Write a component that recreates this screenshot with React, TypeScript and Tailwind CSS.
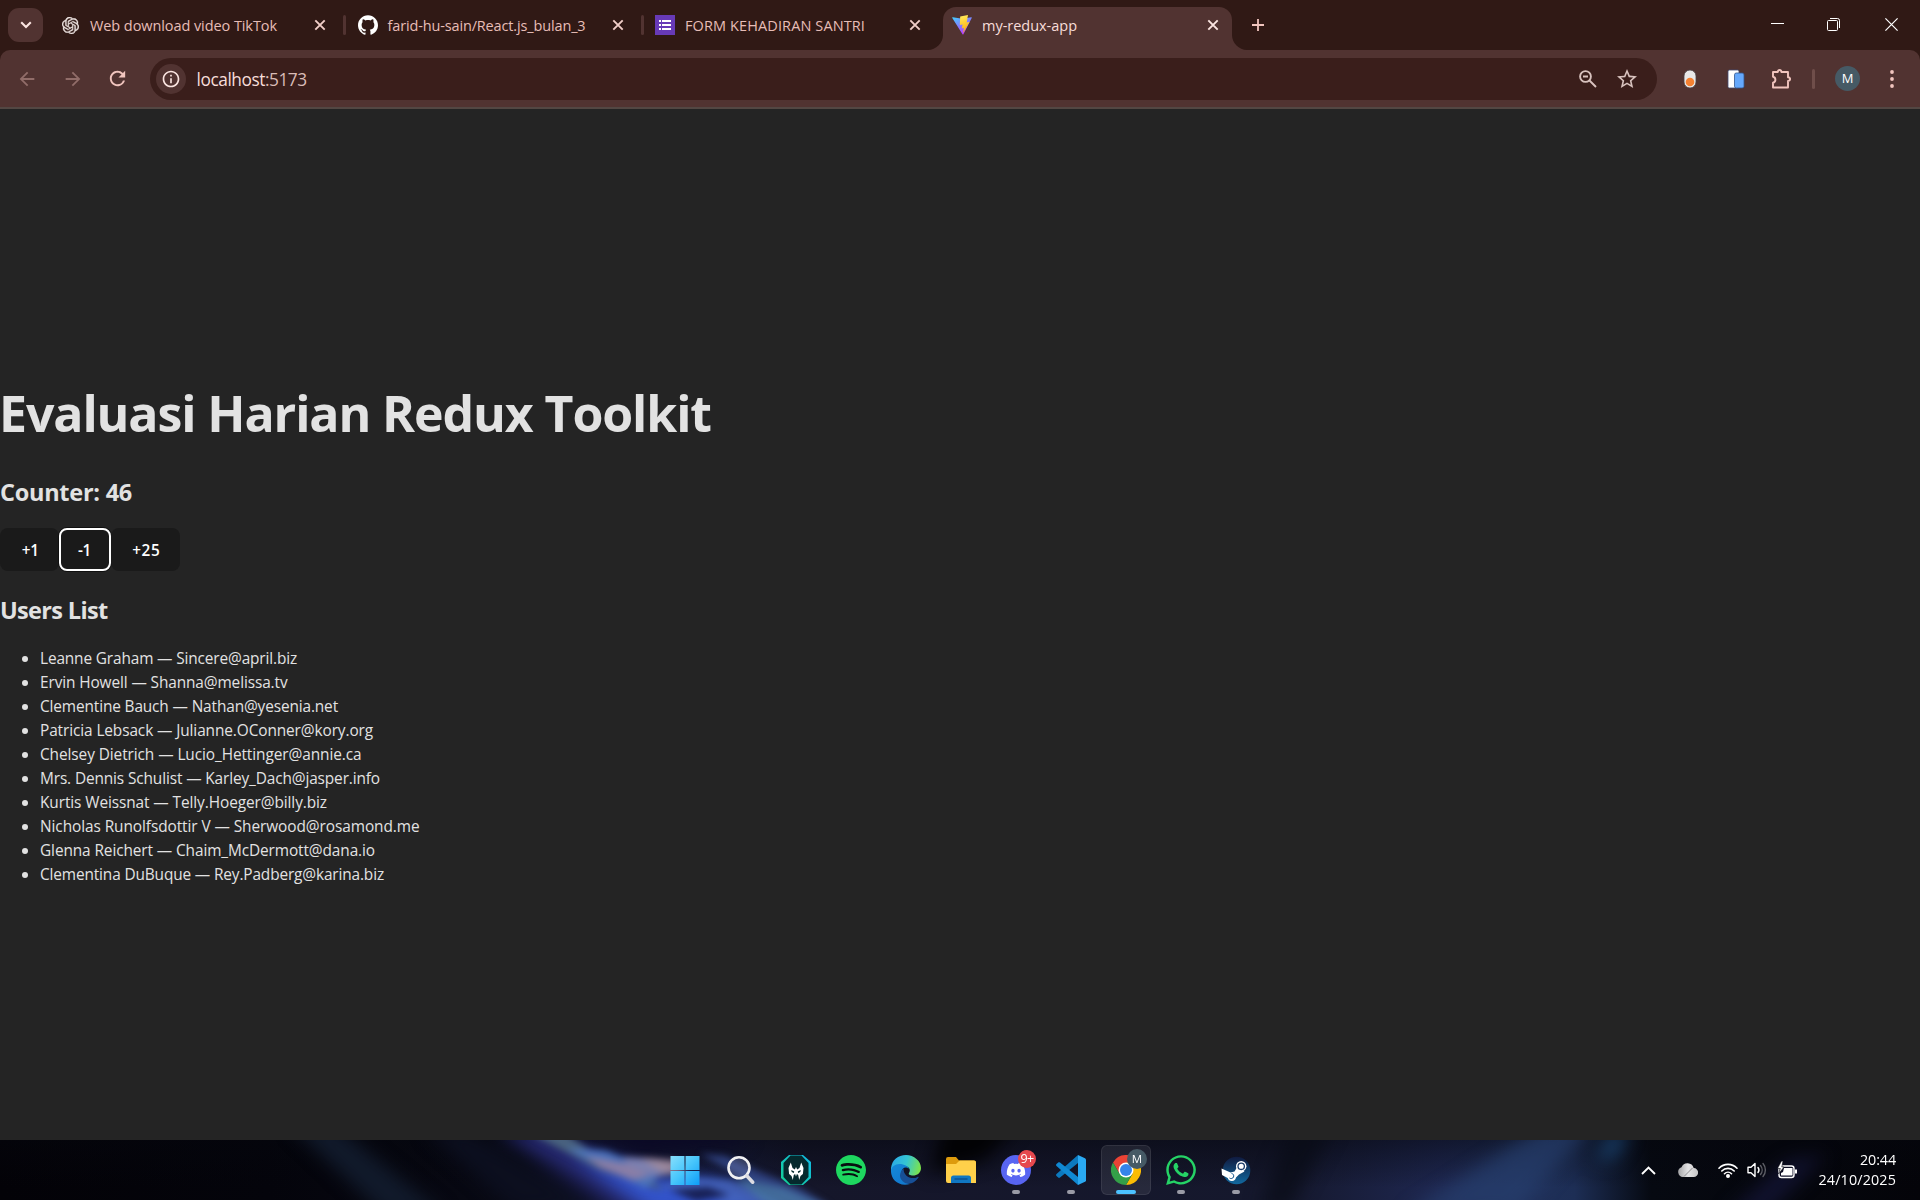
import { useLayoutEffect, useRef, useState, type ReactNode } from "react";
import { SiGithub, SiOpenai, SiSpotify } from "react-icons/si";
import { FaDiscord, FaWhatsapp } from "react-icons/fa";
import { MdArrowBack, MdArrowForward, MdOutlineInfo, MdRefresh, MdStarBorder } from "react-icons/md";

const users = [
  { name: "Leanne Graham", email: "Sincere@april.biz", width: 257 },
  { name: "Ervin Howell", email: "Shanna@melissa.tv", width: 247.5 },
  { name: "Clementine Bauch", email: "Nathan@yesenia.net", width: 298 },
  { name: "Patricia Lebsack", email: "Julianne.OConner@kory.org", width: 333 },
  { name: "Chelsey Dietrich", email: "Lucio_Hettinger@annie.ca", width: 321.5 },
  { name: "Mrs. Dennis Schulist", email: "Karley_Dach@jasper.info", width: 340 },
  { name: "Kurtis Weissnat", email: "Telly.Hoeger@billy.biz", width: 287 },
  { name: "Nicholas Runolfsdottir V", email: "Sherwood@rosamond.me", width: 379.5 },
  { name: "Glenna Reichert", email: "Chaim_McDermott@dana.io", width: 335 },
  { name: "Clementina DuBuque", email: "Rey.Padberg@karina.biz", width: 344 },
];

/* Single-line text whose tracking is adjusted so it fills the given width. */
function Fit({ text, width, className = "" }: { text: string; width: number; className?: string }) {
  const ref = useRef<HTMLSpanElement>(null);
  const [spacing, setSpacing] = useState(0);
  useLayoutEffect(() => {
    const el = ref.current;
    if (el) setSpacing((width - el.getBoundingClientRect().width) / text.length);
  }, [text, width]);
  return (
    <span ref={ref} className={`inline-block whitespace-pre ${className}`} style={{ letterSpacing: `${spacing}px` }}>
      {text}
    </span>
  );
}

function Cross({ className }: { className: string }) {
  return (
    <svg viewBox="0 0 12 12" className={`size-3 shrink-0 ${className}`} fill="none" stroke="currentColor" strokeWidth="1.9">
      <path d="M1.3 1.3l9.4 9.4M10.7 1.3l-9.4 9.4" />
    </svg>
  );
}

function Tab({ icon, title, width, divider }: { icon: ReactNode; title: string; width: number; divider?: boolean }) {
  return (
    <div className="flex h-full w-[297.5px] shrink-0 items-center">
      <div className="flex w-5 shrink-0 justify-center">{icon}</div>
      <div className="mt-px ml-[10px] w-[215px] text-[14.5px] leading-5 text-[#e7bdb7]">
        <Fit text={title} width={width} />
      </div>
      <Cross className="ml-[9px] text-[#f1cec8]" />
      {divider && <div className="ml-[17px] h-5 w-[3px] rounded-full bg-[#513331]" />}
    </div>
  );
}

function ViteLogo() {
  return (
    <svg viewBox="0 0 20 20" className="size-5">
      <defs>
        <linearGradient id="vite-a" x1="0" y1="0" x2="0.6" y2="1">
          <stop stopColor="#41d1ff" />
          <stop offset="1" stopColor="#bd34fe" />
        </linearGradient>
        <linearGradient id="vite-b" x1="0.4" y1="0" x2="0.6" y2="1">
          <stop stopColor="#ffea5a" />
          <stop offset="1" stopColor="#ffa800" />
        </linearGradient>
      </defs>
      <path fill="url(#vite-a)" d="M19.7 3.1 11.4 19.3a.5.5 0 0 1-.9 0L.3 3.1a.5.5 0 0 1 .5-.8l9.5 1.4 8.9-1.4a.5.5 0 0 1 .5.8Z" />
      <path fill="url(#vite-b)" d="M16 0 8.200 1.500 7.800 10l2.800-.6-.8 4 2.200-.6-1 5.400 6.700-11.400-3 .6Z" />
    </svg>
  );
}

function TabStrip() {
  return (
    <div className="flex h-[50px] items-center bg-[#301915]">
      <div className="ml-2 flex h-[34px] w-[35px] shrink-0 items-center justify-center rounded-[11px] bg-[#513331]">
        <svg viewBox="0 0 12 8" className="h-2 w-3" fill="none" stroke="#fbe5e1" strokeWidth="2.1">
          <path d="M1.200 1.300 6 6l4.800-4.700" />
        </svg>
      </div>
      <div className="ml-[17px] flex h-full">
        <Tab
          icon={<SiOpenai className="size-[17px] text-[#eee4e2]" stroke="currentColor" strokeWidth=".5" />}
          title="Web download video TikTok"
          width={187}
          divider
        />
        <Tab icon={<SiGithub className="size-5 text-white" />} title="farid-hu-sain/React.js_bulan_3" width={198} divider />
        <Tab
          icon={
            <svg viewBox="0 0 20 20" className="size-5">
              <path fill="#673ab7" d="M0 0h20v20H0z" />
              <path fill="#fff" d="M4 5h2v2H4zm3 0h9v2H7zM4 9h2v2H4zm3 0h9v2H7zm-3 4h2v2H4zm3 0h9v2H7z" />
            </svg>
          }
          title="FORM KEHADIRAN SANTRI"
          width={180}
        />
      </div>
      <div className="-ml-[24.5px] flex h-full w-[319px] shrink-0 items-end text-[#513331]">
        <svg viewBox="0 0 15 15" className="size-[15px] shrink-0" fill="currentColor">
          <path d="M15 0v15H0C8 15 15 8 15 0Z" />
        </svg>
        <div className="flex h-[43px] w-[289px] items-center rounded-t-[13px] bg-[#513331] pb-[7px] pl-[9px]">
          <ViteLogo />
          <div className="mt-0.5 ml-[10px] w-[226px] text-[14.5px] leading-5 text-[#f7ddd9]">
            <Fit text="my-redux-app" width={95} />
          </div>
          <Cross className="-ml-px text-[#fbe5e1]" />
        </div>
        <svg viewBox="0 0 15 15" className="size-[15px] shrink-0" fill="currentColor">
          <path d="M0 0v15h15C7 15 0 8 0 0Z" />
        </svg>
      </div>
      <svg viewBox="0 0 12 12" className="ml-[5px] size-3 shrink-0" stroke="#f1c5be" strokeWidth="1.800">
        <path d="M6 0v12M0 6h12" />
      </svg>
      <div className="mr-[22px] ml-auto flex items-center pb-0.5 text-white">
        <svg viewBox="0 0 13 13" className="size-[13px]" stroke="currentColor">
          <path d="M0 5.500h13" />
        </svg>
        <svg viewBox="0 0 13 13" className="ml-[43px] size-[13px]" fill="none" stroke="currentColor">
          <rect x=".5" y="2.500" width="10" height="10" rx="1" />
          <path d="M3 .5h7.500a2 2 0 0 1 2 2V10" />
        </svg>
        <svg viewBox="0 0 13 13" className="ml-[45px] size-[13px]" stroke="currentColor" strokeWidth="1.200">
          <path d="m.4.4 12.200 12.200M12.600.4.4 12.600" />
        </svg>
      </div>
    </div>
  );
}

function Toolbar() {
  return (
    <div className="bg-[#301915]">
      <div className="flex h-[59px] items-center rounded-t-[10px] border-b-2 border-[#534743] bg-[#513331]">
        <MdArrowBack className="ml-[16px] size-[22px] shrink-0 text-[#916d69]" />
        <MdArrowForward className="ml-[24px] size-[22px] shrink-0 text-[#916d69]" />
        <MdRefresh className="ml-[22px] size-[23px] shrink-0 text-[#f1c5be]" />
        <div className="mt-px ml-[21px] flex h-[42px] w-[1507px] shrink-0 items-center rounded-full bg-[#3a1e1b] px-1.5">
          <div className="flex size-[30px] items-center justify-center rounded-full bg-[#513331]">
            <MdOutlineInfo className="size-5 text-[#fbe5e1]" />
          </div>
          <div className="mt-px ml-[10.5px] flex text-[17.3px] leading-6 text-[#f7ddd9]">
            <Fit text="localhost" width={68.500} />
            <Fit text=":5173" width={41.5} className="text-[#d9bcb7]" />
          </div>
          <svg viewBox="0 0 18 18" className="ml-auto size-[18px]" fill="none" stroke="#d8c2be" strokeWidth="1.900">
            <circle cx="6.500" cy="6.500" r="5.400" />
            <path d="M10.500 10.500l6.500 6.500M4 6.500h5" />
          </svg>
          <MdStarBorder className="mr-[12px] ml-[18px] size-[24px] text-[#d8c2be]" />
        </div>
        <svg viewBox="0 0 14 20" className="ml-[26px] h-5 w-3.5 shrink-0">
          <rect x="1" y="1" width="12" height="18" rx="6" fill="#e8e8e8" stroke="#4a4145" strokeWidth=".8" />
          <circle cx="7" cy="13" r="4.300" fill="#f48132" />
        </svg>
        <svg viewBox="0 0 18 20" className="ml-[30px] h-5 w-[18px] shrink-0">
          <rect x="1" y="1" width="11" height="18" rx="1.500" fill="#fff" stroke="#434d75" strokeWidth=".8" />
          <rect x="7.500" y="4" width="9.500" height="15" rx="1.800" fill="#65a8fc" stroke="#31568e" strokeWidth=".8" />
        </svg>
        <svg viewBox="0 0 22 22" className="ml-[25px] size-[22px] shrink-0" fill="none" stroke="#f1c5be" strokeWidth="1.900" strokeLinejoin="round">
          <path d="M3 4h4.800c.3-2.600 3.300-2.600 3.600 0H18v5.200c2.800.4 2.800 3.400 0 3.800V19.500H3v-4.700c3.200-.7 3.200-5.300 0-6Z" />
        </svg>
        <div className="ml-5 h-5 w-[3px] rounded-full bg-[#6f4e4a]" />
        <div className="ml-5 flex size-[25px] shrink-0 items-center justify-center rounded-full bg-[#465a65] text-[13px] font-medium text-white">
          M
        </div>
        <svg viewBox="0 0 4 18" className="ml-[30px] h-[18px] w-1 shrink-0" fill="#f1c5be">
          <circle cx="2" cy="2" r="1.900" />
          <circle cx="2" cy="9" r="1.900" />
          <circle cx="2" cy="16" r="1.900" />
        </svg>
      </div>
    </div>
  );
}

function Page() {
  return (
    <main className="flex h-[1031px] flex-col justify-center bg-[#242424] text-[#e2e2e2]">
      <h1 className="mt-[23px] -ml-px text-[50px] leading-[56px] font-bold">
        <Fit text="Evaluasi Harian Redux Toolkit" width={712} />
      </h1>
      <h2 className="mt-[33px] text-[23.5px] leading-9 font-bold">
        <Fit text="Counter: 46" width={132} />
      </h2>
      <div className="mt-[18px] flex text-[15.3px] font-semibold text-white">
        <button className="h-[43px] w-[58.5px] rounded-lg bg-[#1a1a1a] pt-0.5 pl-0.5">
          <Fit text="+1" width={17} />
        </button>
        <button className="h-[43px] w-[52px] rounded-lg border-2 border-white bg-[#1a1a1a] pt-0.5 ring-1 ring-[#101010]">
          <Fit text="-1" width={13} />
        </button>
        <button className="h-[43px] w-[69.5px] rounded-lg bg-[#1a1a1a] pt-0.5 pl-0.5">
          <Fit text="+25" width={28} />
        </button>
      </div>
      <h2 className="mt-[21px] text-[23.5px] leading-9 font-bold">
        <Fit text="Users List" width={107.500} />
      </h2>
      <ul className="mt-[19px]">
        {users.map((user) => (
          <li key={user.name} className="flex h-6 items-center text-[15.4px]">
            <span className="mr-3 ml-[22px] size-1.5 rounded-full bg-[#e2e2e2]" />
            <Fit text={`${user.name} — ${user.email}`} width={user.width} />
          </li>
        ))}
      </ul>
    </main>
  );
}

function Wallpaper() {
  return (
    <svg viewBox="0 0 1920 60" className="absolute inset-0 h-full w-full" preserveAspectRatio="none">
      <defs>
        <linearGradient id="wall">
          <stop stopColor="#030207" />
          <stop offset=".14" stopColor="#04040b" />
          <stop offset=".27" stopColor="#080914" />
          <stop offset=".32" stopColor="#14163c" />
          <stop offset=".38" stopColor="#161a38" />
          <stop offset=".42" stopColor="#15162a" />
          <stop offset=".67" stopColor="#15182d" />
          <stop offset=".75" stopColor="#1e2750" />
          <stop offset=".79" stopColor="#20305a" />
          <stop offset=".82" stopColor="#1d2e55" />
          <stop offset=".86" stopColor="#060911" />
          <stop offset="1" stopColor="#040409" />
        </linearGradient>
        <linearGradient id="wall-shade" x2="0" y2="1">
          <stop stopColor="#05060d" stopOpacity=".5" />
          <stop offset=".8" stopColor="#05060d" stopOpacity="0" />
        </linearGradient>
        <filter id="soft" filterUnits="userSpaceOnUse" x="0" y="-40" width="1920" height="140" colorInterpolationFilters="sRGB">
          <feGaussianBlur stdDeviation="9" />
        </filter>
        <filter id="fine" filterUnits="userSpaceOnUse" x="0" y="-40" width="1920" height="140" colorInterpolationFilters="sRGB">
          <feGaussianBlur stdDeviation="3.500" />
        </filter>
      </defs>
      <path fill="url(#wall)" d="M0 0h1920v60H0z" />
      <path fill="url(#wall-shade)" d="M0 0h1920v60H0z" />
      <g filter="url(#soft)">
        <path fill="#111a2b" d="M290 -15h45l110 90h-60Z" />
        <path fill="#0c0f1f" d="M425 -10h40l140 80h-90Z" />
        <path fill="#252870" d="M495 -10h50l120 50 30 40h-55Z" />
        <path fill="#3354cc" d="M570 10l75 25 70 5 90 35H655l-45-32Z" />
        <path fill="#0b0926" d="M575 -20h170v22L640 12Z" />
        <path fill="#020204" d="M945 -20h75l-35 40-55 14Z" />
        <path fill="#090b16" d="M1292 -15h42l-45 85h-30Z" opacity=".7" />
        <path fill="#263e6e" d="M1545 -15h50l-80 90h-110Z" opacity=".7" />
        <path fill="#1c4777" d="M1610 -8h20l-16 28h-18Z" opacity=".8" />
        <path fill="#11122e" d="M1788 20l38-5-60 60h-40Z" />
      </g>
      <g filter="url(#fine)">
        <path fill="#49627f" d="M528 -8h36l24 17 50 18 25 24-65-22Z" />
        <path fill="#4d76c1" d="M566 8l40 3 56 22-16 16-45-22Z" opacity=".9" />
        <path fill="#8b7ea6" d="M585 16l42 8 24 12-18 4-32-12Z" />
        <path fill="#7c80b0" d="M622 17l38 2 14 14-18 4-26-10Z" />
        <path fill="#a08a9c" d="M640 18l34 2 14 14-24-1Z" opacity=".9" />
        <path fill="#4868bd" d="M655 47l40-9 35 2 60 25h-60l-35-14Z" opacity=".75" />
        <path fill="#182054" d="M670 50l38-3 22 8-34 6Z" />
        <path fill="#344a91" d="M700 14l25 2 35 16 40 16 30 18h-30l-55-27Z" opacity=".8" />
        <path fill="#4878a5" d="M735 38l50 10 45 20h-60Z" opacity=".8" />
      </g>
    </svg>
  );
}

function StartIcon() {
  return (
    <svg viewBox="0 0 30 30" className="mr-0.5 size-[30px]">
      <defs>
        <linearGradient id="win" x1="0" y1="0" x2="30" y2="30" gradientUnits="userSpaceOnUse">
          <stop stopColor="#8be0fc" />
          <stop offset=".5" stopColor="#48c6fb" />
          <stop offset="1" stopColor="#0c9cf8" />
        </linearGradient>
      </defs>
      <path fill="url(#win)" d="M.5 1h14v14H.5zM15.500 1h14v14h-14zM.5 16h14v14H.5zM15.500 16h14v14h-14z" />
    </svg>
  );
}

function SearchIcon() {
  return (
    <svg viewBox="0 0 30 30" className="size-[30px]" fill="none">
      <circle cx="13" cy="12.800" r="10.500" fill="#8090c0" fillOpacity=".3" stroke="#f1f1f3" strokeWidth="2.600" />
      <path d="m21 21 5.700 6.200" stroke="#dcdce2" strokeWidth="3.600" strokeLinecap="round" />
    </svg>
  );
}

function PredatorIcon() {
  return (
    <svg viewBox="0 0 30 30" className="size-[30px]">
      <defs>
        <linearGradient id="pred" x1="0" y1="1" x2="1" y2="0">
          <stop stopColor="#14d092" />
          <stop offset="1" stopColor="#12b9e8" />
        </linearGradient>
      </defs>
      <path fill="url(#pred)" d="M8 0h14l8 7v16l-8 7H8l-8-7V7Z" />
      <path fill="#05292d" d="M9.500.5h11l7 7.500v14l-7 7.500h-11l-7-7.500V8Z" />
      <path fill="#fff" d="m9.800 7.500 1.700 5.500 2.300 1.600L15 12l1.200 2.600 2.300-1.600 1.700-5.500 2.300 5.500-.6 6-2.400 2-1.300 4-1-5-1.300-1-.9 2.500-.9-2.500-1.300 1-1 5-1.300-4-2.400-2-.6-6Z" />
      <path fill="#05292d" d="m10.200 15 3 1.600-.3 1.300-2.200-.9ZM19.800 15l-3 1.600.3 1.300 2.200-.9Z" />
    </svg>
  );
}

function EdgeIcon() {
  return (
    <svg viewBox="0 0 30 30" className="size-[30px]">
      <defs>
        <linearGradient id="edge-a" x1="0" y1=".3" x2="1" y2=".5">
          <stop stopColor="#2aa9e8" />
          <stop offset=".5" stopColor="#35c5d4" />
          <stop offset="1" stopColor="#7be34c" />
        </linearGradient>
        <linearGradient id="edge-b" x1="0" y1="0" x2=".6" y2="1">
          <stop stopColor="#1489d8" />
          <stop offset="1" stopColor="#1279cf" />
        </linearGradient>
      </defs>
      <path fill="url(#edge-a)" d="M0 13C1 5 7 0 15 0s15 6 15 13c0 5-4 7.500-8 7.500-3 0-5-1-4-2.500 2-3 .5-7-5-7C7 11 2 13 0 18Z" />
      <path fill="url(#edge-b)" d="M0 16c0-4 4-7 8.500-7 5 0 8.500 2.500 9.500 5-3-3-7-1.500-7.500 3C10 23 14 28 19 29 8 32 0 25 0 16Z" />
      <path fill="#174f96" d="M12.500 13.500C9 17 7 22 12 26.500c5 4.500 12 1.500 15.500-4 .3-.6-.2-.9-.8-.6C21 25 12.500 22 12.500 13.500Z" />
    </svg>
  );
}

function FolderIcon() {
  return (
    <svg viewBox="0 0 30 30" className="size-[30px]">
      <path fill="#dd9b0d" d="M0 4a2 2 0 0 1 2-2h8l3 3.500h15a2 2 0 0 1 2 2V12H0Z" />
      <path fill="#ffd04a" d="M0 9h10l3.500-3.500H28a2 2 0 0 1 2 2V28H2a2 2 0 0 1-2-2Z" />
      <path fill="#1077c2" d="M5 28v-5a2.500 2.500 0 0 1 2.500-2.500h15A2.500 2.500 0 0 1 25 23v5Z" />
      <path stroke="#0b5292" strokeWidth="1.500" strokeLinecap="round" d="M9 24h12" />
    </svg>
  );
}

function DiscordIcon() {
  return (
    <div className="relative flex size-[30px] items-center justify-center rounded-full bg-[#5865f2]">
      <FaDiscord className="size-5 text-white" />
      <div className="absolute -top-[5px] left-[17px] flex size-[18px] items-center justify-center rounded-full bg-[#e6494e] text-[12.5px] leading-none tracking-tighter text-white">
        9+
      </div>
    </div>
  );
}

function CodeIcon() {
  return (
    <svg viewBox="0 0 30 30" className="size-[30px]">
      <path fill="#0c79be" d="M22 0v8L4 22.500c-.6.5-1.300.5-1.800 0L.5 21c-.6-.6-.6-1.300 0-1.900Z" />
      <path fill="#1089d3" d="M22 30v-8L4 7.500c-.6-.5-1.300-.5-1.800 0L.5 9c-.6.6-.6 1.300 0 1.900Z" />
      <path fill="#2aa9f2" d="m22 0 7 3.200a1.800 1.800 0 0 1 1 1.600v20.400a1.800 1.800 0 0 1-1 1.600L22 30Z" />
    </svg>
  );
}

function ChromeIcon() {
  return (
    <div className="relative size-[30px]">
      <svg viewBox="0 0 30 30" className="size-[30px]">
        <path fill="#ea4335" d="M2 7.500A15 15 0 0 1 28 7.500H15L8.500 18.700Z" />
        <path fill="#fbbc04" d="M28 7.500A15 15 0 0 1 15 30l6.500-11.200L15 7.500Z" />
        <path fill="#34a048" d="M15 30A15 15 0 0 1 2 7.500l6.500 11.200h13Z" />
        <circle cx="15" cy="15" r="7.500" fill="#fff" />
        <circle cx="15" cy="15" r="6" fill="#3584ea" />
      </svg>
      <div className="absolute -top-[6px] left-[16px] flex size-5 items-center justify-center rounded-full bg-[#465a65] text-[11.500px] leading-none text-white">
        M
      </div>
    </div>
  );
}

function SteamIcon() {
  return (
    <svg viewBox="0 0 30 30" className="size-[30px]">
      <defs>
        <linearGradient id="steam" x2="0" y2="1">
          <stop stopColor="#101a3f" />
          <stop offset="1" stopColor="#12699f" />
        </linearGradient>
      </defs>
      <circle cx="15.500" cy="15.500" r="13.800" fill="url(#steam)" />
      <path fill="#fff" d="m.5 13.500 9 4 4-1 3-5 7 5-5.500 3-3 3a4.300 4.300 0 0 1-8.300.5L1 20Z" />
      <circle cx="20.200" cy="11.300" r="5.200" fill="#fff" />
      <circle cx="20.200" cy="11.300" r="3.200" fill="none" stroke="#183a68" strokeWidth="1.300" />
      <path d="M8.500 23a2.600 2.600 0 1 0 2-4.600" fill="none" stroke="#12548a" strokeWidth="1" />
    </svg>
  );
}

type AppSlot = { icon: ReactNode; state?: "open" | "active" };

const apps: AppSlot[] = [
  { icon: <StartIcon /> },
  { icon: <SearchIcon /> },
  { icon: <PredatorIcon /> },
  {
    icon: (
      <div className="flex size-[30px] items-center justify-center rounded-full bg-[#080d10]">
        <SiSpotify className="size-[30px] text-[#1ed760]" />
      </div>
    ),
  },
  { icon: <EdgeIcon /> },
  { icon: <FolderIcon /> },
  { icon: <DiscordIcon />, state: "open" },
  { icon: <CodeIcon />, state: "open" },
  { icon: <ChromeIcon />, state: "active" },
  { icon: <FaWhatsapp className="size-[34px] text-[#25d366]" />, state: "open" },
  { icon: <SteamIcon />, state: "open" },
];

function Tray() {
  return (
    <div className="flex items-center pr-6">
      <svg viewBox="0 0 15 9" className="h-[9px] w-[15px]" fill="none" stroke="#fff" strokeWidth="1.900">
        <path d="m1 8 6.500-6.500L14 8" />
      </svg>
      <svg viewBox="0 0 20 14" className="ml-[22px] h-3.5 w-5">
        <defs>
          <linearGradient id="cloud">
            <stop stopColor="#a4a4a6" />
            <stop offset=".5" stopColor="#e4e4e5" />
            <stop offset="1" stopColor="#c5c5c6" />
          </linearGradient>
        </defs>
        <path fill="url(#cloud)" d="M5 14A5 5 0 0 1 3.500 4.300 6.500 6.500 0 0 1 15.700 5 4.500 4.500 0 0 1 15.500 14Z" />
        <path d="M6 13.500 14.500 5" stroke="#8b8b8e" />
      </svg>
      <svg viewBox="0 0 20 16" className="ml-[20px] h-4 w-5" fill="none" stroke="#fff" strokeWidth="1.600" strokeLinecap="round">
        <path d="M1 6.200a12.500 12.500 0 0 1 18 0M3.800 9a8.700 8.700 0 0 1 12.400 0M6.500 11.700a5 5 0 0 1 7 0" />
        <circle cx="10" cy="14" r="1.200" fill="#fff" />
      </svg>
      <svg viewBox="0 0 20 16" className="ml-[9px] h-4 w-5" fill="none" stroke="#fff" strokeWidth="1.400" strokeLinejoin="round" strokeLinecap="round">
        <path d="M1 5.200h3L8 1.500v13l-4-3.700H1ZM11 5.500a4 4 0 0 1 0 5" />
        <path d="M13.500 3.500a7 7 0 0 1 0 9M16 1.500a10 10 0 0 1 0 13" stroke="#5d5e65" />
      </svg>
      <svg viewBox="0 0 20 18" className="ml-[10px] h-[18px] w-5">
        <rect x="2" y="5" width="15" height="11.500" rx="2.500" fill="none" stroke="#fff" strokeWidth="1.400" />
        <path fill="#fff" d="M7 7h8.500v7.500H4V12l2-1ZM18 8.500h2v4h-2z" />
        <path fill="#fff" stroke="#080a12" strokeWidth=".6" d="M4.500 0 .5 7.500h2.800L1.500 13 7 6H4.800L6 0Z" />
      </svg>
      <div className="ml-[21px] flex w-[78px] flex-col items-end text-[14.3px] leading-5 text-white">
        <Fit text="20:44" width={36} />
        <Fit text="24/10/2025" width={77.500} />
      </div>
    </div>
  );
}

function Taskbar() {
  return (
    <footer className="relative h-[60px] overflow-hidden bg-[#040409]">
      <Wallpaper />
      <div className="relative flex h-full items-center justify-between">
        <div className="ml-[661px] flex items-center gap-[5px]">
          {apps.map(({ icon, state }, i) => (
            <div
              key={i}
              className={`relative flex h-[50px] w-[50px] items-center justify-center rounded-md border ${
                state === "active" ? "border-white/8 bg-white/8" : "border-transparent"
              }`}
            >
              {icon}
              {state && (
                <div
                  className={`absolute bottom-0 h-1 rounded-full ${state === "active" ? "w-5 bg-[#4cc2ff]" : "w-2 bg-[#9a9ba6]"}`}
                />
              )}
            </div>
          ))}
        </div>
        <Tray />
      </div>
    </footer>
  );
}

export default function App() {
  return (
    <div className="h-[1200px] w-[1920px] overflow-hidden bg-[#242424] font-['Open_Sans','Noto_Sans',sans-serif]">
      <TabStrip />
      <Toolbar />
      <Page />
      <Taskbar />
    </div>
  );
}
